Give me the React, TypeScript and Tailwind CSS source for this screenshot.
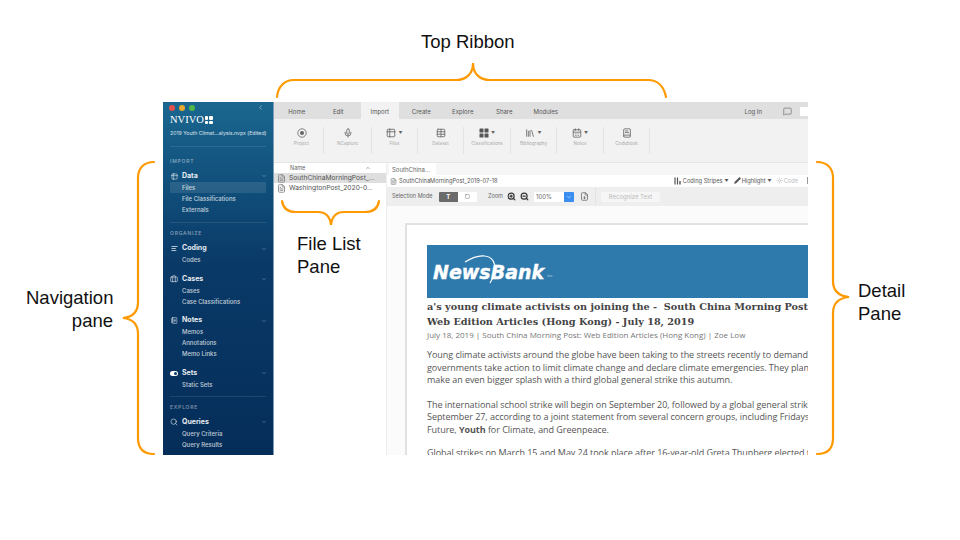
import { ChevronDown, ChevronLeft, ChevronUp, FileText, Search, Table, Table2, Briefcase, NotebookText, MessageSquare, Mic, BookText, Library, CalendarDays, Pencil, Sun, ZoomIn, ZoomOut, Square, FileDown, AlignLeft } from 'lucide-react';
import type { ReactNode } from 'react';

const tabs = ['Home', 'Edit', 'Import', 'Create', 'Explore', 'Share', 'Modules'];

const ProjectIcon = () => (
  <svg width="10" height="10" viewBox="0 0 10 10" fill="none" stroke="currentColor">
    <circle cx="5" cy="5" r="4.2" strokeWidth="0.8" />
    <circle cx="5" cy="5" r="2" fill="currentColor" stroke="none" />
  </svg>
);

const ClassificationsIcon = () => (
  <svg width="10" height="10" viewBox="0 0 10 10" fill="#555">
    <rect x="0.5" y="0.5" width="4" height="4" rx="0.5" />
    <rect x="5.5" y="0.5" width="4" height="4" rx="0.5" />
    <rect x="0.5" y="5.5" width="4" height="4" rx="0.5" />
    <rect x="5.5" y="5.5" width="4" height="4" rx="0.5" />
  </svg>
);

const ribbonItems = [
  { label: 'Project', icon: <ProjectIcon />, caret: false, w: 'w-[44px]' },
  { label: 'NCapture', icon: <Mic size={10} />, caret: false, w: 'w-[48px]' },
  { label: 'Files', icon: <Table2 size={10} />, caret: true, w: 'w-[46px]' },
  { label: 'Dataset', icon: <Table size={10} />, caret: false, w: 'w-[46px]' },
  { label: 'Classifications', icon: <ClassificationsIcon />, caret: true, w: 'w-[47px]' },
  { label: 'Bibliography', icon: <Library size={10} />, caret: true, w: 'w-[46px]' },
  { label: 'Notes', icon: <CalendarDays size={10} />, caret: true, w: 'w-[47px]' },
  { label: 'Codebook', icon: <BookText size={10} />, caret: false, w: 'w-[46px]' },
];

const NavGroup = ({ icon, title, items, active }: { icon: ReactNode; title: string; items: string[]; active?: string }) => (
  <div className="mb-[5.5px]">
    <div className="flex h-[14px] items-center pr-[6px] pt-[3px]">
      <span className="flex w-[8px] justify-center text-white/80">{icon}</span>
      <span className="ml-[4px] flex-1 text-[7px] font-bold text-white/90">{title}</span>
      <ChevronDown size={6} className="text-white/50" />
    </div>
    {items.map(item => (
      <div
        key={item}
        className={`mr-[7px] flex h-[11px] items-center pl-[12px] text-[6px] font-medium text-white/75 ${item === active ? 'rounded-[1px] bg-white/10' : ''}`}
      >
        {item}
      </div>
    ))}
  </div>
);

const SectionHead = ({ title }: { title: string }) => (
  <div className="mb-[3px] h-[8px] text-[5px] font-medium leading-[8px] tracking-[0.8px] text-white/50">{title}</div>
);

const Sidebar = () => (
  <aside className="flex w-[111px] shrink-0 flex-col overflow-hidden border-r border-[#7f9db8] bg-gradient-to-b from-[#1a6790] via-[#0a3a68] via-[45%] to-[#052d59] pl-[7px]">
    <div className="-ml-[1px] flex h-[16px] items-center gap-[4px] pr-[9px] pt-[1px]">
      <span className="h-[6px] w-[6px] rounded-full bg-[#e4504a]" />
      <span className="h-[6px] w-[6px] rounded-full bg-[#e7a92e]" />
      <span className="h-[6px] w-[6px] rounded-full bg-[#4fb848]" />
      <ChevronLeft size={7} className="ml-auto text-white/70" />
    </div>
    <div className="mt-[1px] flex h-[13px] items-center">
      <span className="font-['Liberation_Serif',serif] text-[10.5px] text-white">NVIVO</span>
      <span className="ml-[1px] grid grid-cols-2 gap-[1px]">
        <span className="h-[3.5px] w-[3.5px] rounded-[1px] bg-white" />
        <span className="h-[3.5px] w-[3.5px] rounded-[1px] bg-white" />
        <span className="h-[3.5px] w-[3.5px] rounded-[1px] bg-white" />
        <span className="h-[3.5px] w-[3.5px] rounded-[1px] bg-white" />
      </span>
    </div>
    <div className="mt-[1px] h-[11px] text-[5.2px] leading-[11px] text-white/80">2019 Youth Climat...alysis.nvpx (Edited)</div>
    <div className="mb-[10px] mr-[7px] mt-[7px] border-t border-white/10" />
    <SectionHead title="IMPORT" />
    <NavGroup icon={<Table2 size={7} />} title="Data" items={['Files', 'File Classifications', 'Externals']} active="Files" />
    <div className="mb-[6px] mr-[7px] mt-[2px] border-t border-white/10" />
    <SectionHead title="ORGANIZE" />
    <NavGroup icon={<AlignLeft size={7} strokeWidth={3} />} title="Coding" items={['Codes']} />
    <NavGroup icon={<Briefcase size={8} />} title="Cases" items={['Cases', 'Case Classifications']} />
    <NavGroup icon={<NotebookText size={7} />} title="Notes" items={['Memos', 'Annotations', 'Memo Links']} />
    <NavGroup
      icon={
        <span className="flex h-[5px] w-[8px] items-center justify-end rounded-full bg-white pr-[1px]">
          <span className="h-[3px] w-[3px] rounded-full bg-[#0a3a68]" />
        </span>
      }
      title="Sets"
      items={['Static Sets']}
    />
    <div className="mb-[6px] mr-[7px] mt-[0.5px] border-t border-white/10" />
    <SectionHead title="EXPLORE" />
    <NavGroup icon={<Search size={8} />} title="Queries" items={['Query Criteria', 'Query Results']} />
  </aside>
);

const Ribbon = () => (
  <div className="shrink-0">
    <div className="flex h-[17px] bg-[#dfdfdf] pl-[2px] text-[6px] text-[#555]">
      {tabs.map(tab => (
        <div key={tab} className="flex h-full w-[41.5px] justify-center">
          <span className={`flex items-center justify-center pt-[1px] ${tab === 'Import' ? 'w-[38px] bg-[#f2f2f2]' : ''}`}>{tab}</span>
        </div>
      ))}
      <div className="ml-auto flex h-full items-center pt-[1px]">
        <span className="mr-[21px]">Log In</span>
        <MessageSquare size={9} className="mr-[8px] text-[#777]" />
        <span className="h-[9px] w-[8px] rounded-l-[1px] bg-white" />
      </div>
    </div>
    <div className="flex h-[44px] items-start border-b border-[#e6e6e6] bg-[#f2f2f2] pl-[6px] pt-[8px]">
      {ribbonItems.map(item => (
        <div key={item.label} className={`flex h-[27px] ${item.w} flex-col items-center border-r border-[#e4e4e4] text-[#666]`}>
          <div className="flex h-[11px] items-center gap-[2px]">
            {item.icon}
            {item.caret && <span className="text-[4px] text-[#666]">▼</span>}
          </div>
          <span className="mt-[3px] whitespace-nowrap text-[4.6px] leading-[6px] text-[#aaa]">{item.label}</span>
        </div>
      ))}
    </div>
  </div>
);

const FileList = () => (
  <div className="w-[113px] shrink-0 border-r border-[#ececec] bg-white">
    <div className="flex h-[10px] items-center pl-[16px] pr-[15px] text-[5.5px] text-[#666]">
      <span>Name</span>
      <ChevronUp size={6} className="ml-auto" />
    </div>
    <div className="flex h-[10px] items-center bg-[#dedede] pl-[3px] text-[6.7px] text-[#555]">
      <FileText size={9} className="mr-[3px] text-[#777]" />
      SouthChinaMorningPost_...
    </div>
    <div className="flex h-[10px] items-center pl-[3px] text-[6.7px] text-[#555]">
      <FileText size={9} className="mr-[3px] text-[#777]" />
      WashingtonPost_2020-0...
    </div>
  </div>
);

const DetailToolbar = () => (
  <>
    <div className="flex h-[12px] shrink-0 bg-[#f6f6f6] pl-[2px]">
      <div className="flex h-[12px] w-[47px] items-center bg-white pl-[3px] text-[6px] text-[#666]">SouthChina...</div>
    </div>
    <div className="flex h-[12px] shrink-0 items-center bg-white pl-[3px] text-[5.7px] text-[#555]">
      <FileText size={7} className="mr-[2px] text-[#777]" />
      SouthChinaMorningPost_2019-07-18
      <div className="ml-auto flex items-center">
        <svg width="8" height="8" viewBox="0 0 8 8" className="mr-[0.5px] text-[#555]" fill="none" stroke="currentColor">
          <path d="M1 0.5V7.5M3.5 0.5V7.5" strokeWidth="1.2" />
          <path d="M6 4V7.5" strokeWidth="1.4" />
        </svg>
        <span>Coding Stripes</span>
        <span className="ml-[2px] text-[4px]">▼</span>
        <Pencil size={7} fill="#555" className="ml-[5px] mr-[1px]" />
        <span>Highlight</span>
        <span className="ml-[2px] text-[4px]">▼</span>
        <Sun size={7} className="ml-[4px] mr-[1px] text-[#bbb]" />
        <span className="text-[#bbb]">Code</span>
        <span className="ml-[9px] h-[7px] w-[1px] bg-[#999]" />
      </div>
    </div>
    <div className="flex h-[19px] shrink-0 items-center bg-[#eeeeee] pl-[5px] text-[5.5px] text-[#666]">
      <span className="w-[41px]">Selection Mode</span>
      <span className="ml-[6px] flex h-[10px] w-[18.5px] items-center justify-center rounded-l-[1px] bg-[#6b6b6b] text-[6px] font-bold text-white">T</span>
      <span className="flex h-[10px] w-[19px] items-center justify-center rounded-r-[1px] bg-white"><Square size={5} /></span>
      <span className="ml-[11.5px] w-[13.5px]">Zoom</span>
      <ZoomIn size={9} className="ml-[5px] text-[#333]" strokeWidth={3} />
      <ZoomOut size={9} className="ml-[4.5px] text-[#333]" strokeWidth={3} />
      <span className="ml-[5px] flex h-[10px] w-[30px] items-center bg-white pl-[2px] text-[6px]">100%</span>
      <span className="flex h-[10px] w-[9.5px] items-center justify-center rounded-r-[1px] bg-[#3b8df0]"><ChevronDown size={6} className="text-white" /></span>
      <FileDown size={9} className="ml-[6px]" />
      <span className="ml-[6px] h-[17px] w-[1px] bg-[#e2e2e2]" />
      <span className="ml-[5.5px] flex h-[10px] w-[59px] items-center justify-center rounded-[1px] bg-[#f6f6f6] text-[6px] text-[#bbb]">Recognize Text</span>
    </div>
  </>
);

const Article = () => (
  <div className="min-h-0 flex-1 overflow-hidden bg-[#fbfbfb] pl-[18px] pt-[17px]">
    <div className="h-[300px] border-l-2 border-t-2 border-[#e2e2e2] bg-white pl-[20px] pt-[20px] font-['Open_Sans',sans-serif] text-[#555]">
      <div className="relative flex h-[53px] items-center overflow-hidden bg-[#2f7aad] pl-[6px]">
        <span className="mt-[1px] font-['DejaVu_Sans',sans-serif] text-[19px] font-bold italic text-white [-webkit-text-stroke:0.4px_white]">NewsBank</span>
        <span className="ml-[3px] mt-[9px] text-[4px] text-white/70">inc.</span>
        <svg className="absolute left-0 top-0" width="90" height="53" viewBox="0 0 90 53" fill="none">
          <path d="M38 17 C46 12 52 10 58 11 C68 12 72 24 63 38" stroke="#fff" strokeWidth="1.2" />
        </svg>
      </div>
      <div className="mt-[2px] whitespace-nowrap font-['DejaVu_Serif',serif] text-[9.7px] font-bold leading-[14.5px] text-[#444]">
        a's young climate activists on joining the -&nbsp; South China Morning Post:
        <br />
        Web Edition Articles (Hong Kong) - July 18, 2019
      </div>
      <div className="whitespace-nowrap text-[8px] leading-[12px] text-[#777]">July 18, 2019 | South China Morning Post: Web Edition Articles (Hong Kong) | Zoe Low</div>
      <div className="mt-[8px] whitespace-nowrap text-[9px] leading-[12.5px] tracking-[-0.05px]">
        Young climate activists around the globe have been taking to the streets recently to demand
        <br />
        governments take action to limit climate change and declare climate emergencies. They plan to
        <br />
        make an even bigger splash with a third global general strike this autumn.
      </div>
      <div className="mt-[12px] whitespace-nowrap text-[9px] leading-[12.5px] tracking-[-0.05px]">
        The international school strike will begin on September 20, followed by a global general strike on
        <br />
        September 27, according to a joint statement from several concern groups, including Fridays for
        <br />
        Future, <b>Youth</b> for Climate, and Greenpeace.
      </div>
      <div className="mt-[11px] whitespace-nowrap text-[9px] leading-[12.5px] tracking-[-0.05px]">
        Global strikes on March 15 and May 24 took place after 16-year-old Greta Thunberg elected to
      </div>
    </div>
  </div>
);

const Label = ({ className, children }: { className: string; children: ReactNode }) => (
  <div className={`absolute font-['Liberation_Sans',sans-serif] text-[18.5px] leading-[22.5px] text-[#111] ${className}`}>{children}</div>
);

const App = () => {
  return (
    <div className="relative h-[540px] w-[960px] overflow-hidden bg-white pl-[163px] pt-[102px] font-['Inter',sans-serif]">
      <div className="flex h-[353px] w-[645px] overflow-hidden">
        <Sidebar />
        <div className="flex min-w-0 flex-1 flex-col bg-white">
          <Ribbon />
          <div className="flex min-h-0 flex-1">
            <FileList />
            <div className="flex min-w-0 flex-1 flex-col overflow-hidden">
              <DetailToolbar />
              <Article />
            </div>
          </div>
        </div>
      </div>

      <Label className="left-[421px] top-[31px]">Top Ribbon</Label>
      <Label className="left-[297px] top-[233px]">File List<br />Pane</Label>
      <Label className="left-[26px] top-[287px] w-[87px] text-right">Navigation<br />pane</Label>
      <Label className="left-[858px] top-[280px]">Detail<br />Pane</Label>

      {/* orange braces around the panes */}
      <svg className="pointer-events-none absolute left-0 top-0" width="960" height="540" viewBox="0 0 960 540" fill="none" stroke="#ff9900" strokeWidth="2.2" strokeLinecap="round">
        <path d="M277 97 C278 87 284 80 294 80 L456 80 C466 80 473 74 473 63 C473 74 480 80 490 80 L648 80 C658 80 664 87 666 97" />
        <path d="M282 201 C283 208 288 212 296 212 L318 212 C325 212 330 216 331 225 C332 216 337 212 344 212 L365 212 C373 212 378 208 379 201" />
        <path d="M154 162 C144 162 138 168 138 178 L138 302 C138 312 133 317 123 318 C133 319 138 324 138 334 L138 438 C138 449 144 454 154 454" />
        <path d="M817 162 C827 162 833 168 833 178 L833 281 C833 291 839 296 849 297 C839 298 833 303 833 313 L833 438 C833 449 827 454 817 454" />
      </svg>
    </div>
  );
};

export default App;
